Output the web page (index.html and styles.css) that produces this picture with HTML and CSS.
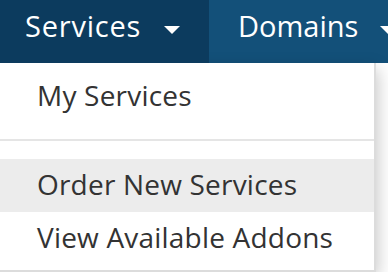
FILE: index.html
```html
<!DOCTYPE html>
<html lang="en">
<head>
    <meta charset="UTF-8">
    <meta name="viewport" content="width=device-width, initial-scale=1.0">
    <title>Services Menu</title>
    <link rel="stylesheet" href="styles.css">
</head>
<body>
    <div class="navbar">
        <a class="nav-link nav-open" href="#">Services <span class="caret"></span></a>
        <a class="nav-link" href="#">Domains <span class="caret"></span></a>
    </div>
    <div class="menu">
        <a class="menu-link" href="#">My Services</a>
        <div class="menu-divider"></div>
        <a class="menu-link menu-active" href="#">Order New Services</a>
        <a class="menu-link" href="#">View Available Addons</a>
    </div>
</body>
</html>
```

FILE: styles.css
```css
body {
    margin: 0;
    font-family: 'Open Sans', 'Liberation Sans', sans-serif;
    background-color: #ffffff;
}
.navbar {
    display: flex;
    height: 63px;
    background-color: #135079;
}
.nav-link {
    display: block;
    flex-shrink: 0;
    height: 63px;
    line-height: 51px;
    padding-left: 29px;
    color: #ffffff;
    font-size: 29px;
    text-decoration: none;
    white-space: nowrap;
}
.nav-open {
    box-sizing: border-box;
    width: 209px;
    padding-left: 25px;
    letter-spacing: 0.8px;
    background-color: #0c3b5e;
}
.caret {
    display: inline-block;
    width: 0;
    height: 0;
    margin-left: 14px;
    border-top: 8px solid #ffffff;
    border-left: 8px solid transparent;
    border-right: 8px solid transparent;
    vertical-align: 3px;
}
.menu {
    width: 374px;
    padding: 7px 0 5px;
    background-color: #ffffff;
    border-right: 2px solid #dcdcdc;
    border-bottom: 2px solid #dcdcdc;
    box-shadow: 2px 6px 16px rgba(0, 0, 0, 0.22);
}
.menu-link {
    display: block;
    height: 53px;
    line-height: 51px;
    padding-left: 37px;
    color: #333333;
    font-size: 28px;
    letter-spacing: 0.2px;
    text-decoration: none;
    white-space: nowrap;
}
.menu-active {
    background-color: #ececec;
}
.menu-divider {
    height: 2px;
    margin: 16px 0 18px;
    background-color: #e5e5e5;
}
```
